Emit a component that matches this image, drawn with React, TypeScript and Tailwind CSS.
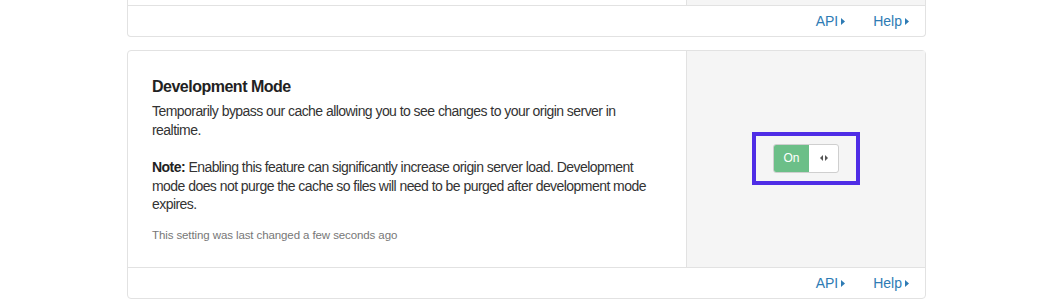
export default function App() {
  return (
    <div className="w-[1050px] h-[300px] bg-white overflow-hidden font-['Liberation_Sans',Arial,sans-serif]">
      {/* previous card, only its bottom shows */}
      <div className="ml-[127px] w-[799px] border border-t-0 border-[#e2e2e2] rounded-b-[4px]">
        <div className="flex h-[5px]">
          <div className="w-[558px]" />
          <div className="flex-1 bg-[#f5f5f5] border-l border-[#e2e2e2]" />
        </div>
        <Footer />
      </div>

      {/* Development Mode */}
      <div className="ml-[127px] mt-[13px] w-[799px] border border-[#e2e2e2] rounded-[4px]">
        <div className="flex h-[216px]">
          <div className="w-[558px] pl-6 pr-5 pt-[24px] text-[#333] tracking-[-0.55px]">
            <h3 className="text-[16px] leading-[24px] font-bold text-[#222] tracking-[-0.5px]">Development Mode</h3>
            <p className="mt-[3px] text-[14px] leading-[18.5px]">
              Temporarily bypass our cache allowing you to see changes to your origin server in realtime.
            </p>
            <p className="mt-[19px] text-[14px] leading-[18.5px]">
              <span className="font-bold text-[#222]">Note:</span>{' '}
              <span>
                Enabling this feature can significantly increase origin server load. Development mode does not purge the
                cache so files will need to be purged after development mode expires.
              </span>
            </p>
            <p className="mt-[13px] text-[11.5px] leading-4 text-[#777] tracking-[-0.1px]">
              This setting was last changed a few seconds ago
            </p>
          </div>
          <div className="flex-1 bg-[#f5f5f5] border-l border-[#e2e2e2] flex items-center justify-center">
            <div className="border-4 border-[#4f2de6] px-[17px] py-[8px] -mt-[2px]">
              <div className="flex h-[29px] w-[66px] rounded-[3px] border border-[#cfcfcf] overflow-hidden bg-white">
                <div className="w-[35px] bg-[#6cbf88] text-white text-[12px] flex items-center justify-center">On</div>
                <div className="flex-1 flex items-center justify-center gap-[2px] text-[#555]">
                  <svg width="3" height="6" viewBox="0 0 3 6"><path d="M3 0 L0 3 L3 6 Z" fill="currentColor" /></svg>
                  <svg width="3" height="6" viewBox="0 0 3 6"><path d="M0 0 L3 3 L0 6 Z" fill="currentColor" /></svg>
                </div>
              </div>
            </div>
          </div>
        </div>
        <Footer />
      </div>
    </div>
  );
}

function Footer() {
  return (
    <div className="h-[31px] border-t border-[#e2e2e2] flex items-center justify-end gap-[28px] pr-[16px] text-[14px] text-[#2e7bb4]">
      <a className="flex items-center gap-[3px]">
        API
        <svg width="4" height="7" viewBox="0 0 4 7"><path d="M0 0 L4 3.5 L0 7 Z" fill="currentColor" /></svg>
      </a>
      <a className="flex items-center gap-[3px]">
        Help
        <svg width="4" height="7" viewBox="0 0 4 7"><path d="M0 0 L4 3.5 L0 7 Z" fill="currentColor" /></svg>
      </a>
    </div>
  );
}
